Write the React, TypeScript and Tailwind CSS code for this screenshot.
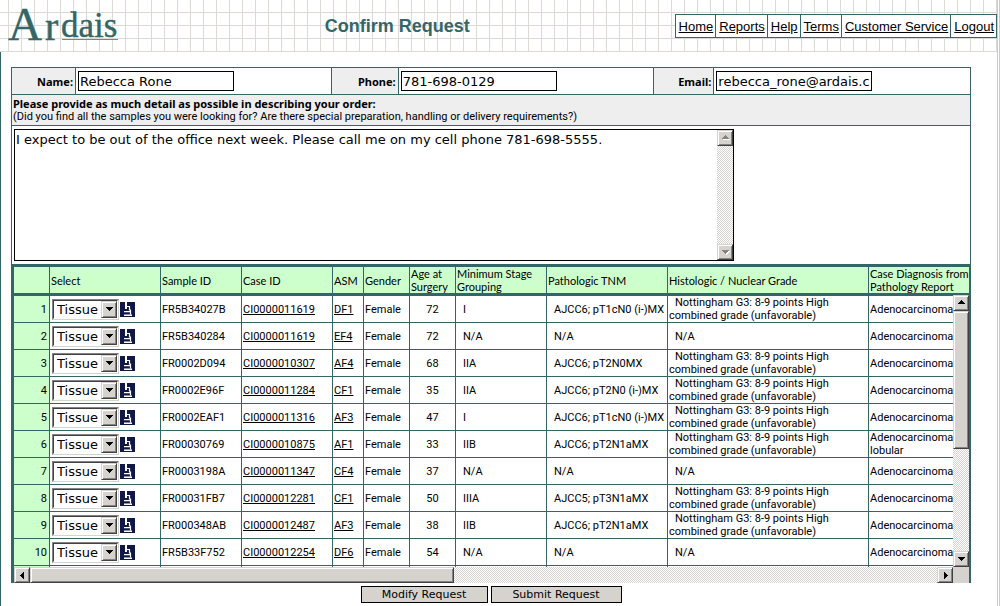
import React from "react";

type Sample = {
  id: string;
  caseId: string;
  asm: string;
  age: number;
  stage: string;
  tnm: string;
  graded: boolean;
  diagnosis: string;
};

const samples: Sample[] = [
  { id: "FR5B34027B", caseId: "CI0000011619", asm: "DF1", age: 72, stage: "I", tnm: "AJCC6; pT1cN0 (i-)MX", graded: true, diagnosis: "Adenocarcinoma" },
  { id: "FR5B340284", caseId: "CI0000011619", asm: "EF4", age: 72, stage: "N/A", tnm: "N/A", graded: false, diagnosis: "Adenocarcinoma" },
  { id: "FR0002D094", caseId: "CI0000010307", asm: "AF4", age: 68, stage: "IIA", tnm: "AJCC6; pT2N0MX", graded: true, diagnosis: "Adenocarcinoma" },
  { id: "FR0002E96F", caseId: "CI0000011284", asm: "CF1", age: 35, stage: "IIA", tnm: "AJCC6; pT2N0 (i-)MX", graded: true, diagnosis: "Adenocarcinoma" },
  { id: "FR0002EAF1", caseId: "CI0000011316", asm: "AF3", age: 47, stage: "I", tnm: "AJCC6; pT1cN0 (i-)MX", graded: true, diagnosis: "Adenocarcinoma" },
  { id: "FR00030769", caseId: "CI0000010875", asm: "AF1", age: 33, stage: "IIB", tnm: "AJCC6; pT2N1aMX", graded: true, diagnosis: "Adenocarcinoma\nlobular" },
  { id: "FR0003198A", caseId: "CI0000011347", asm: "CF4", age: 37, stage: "N/A", tnm: "N/A", graded: false, diagnosis: "Adenocarcinoma" },
  { id: "FR00031FB7", caseId: "CI0000012281", asm: "CF1", age: 50, stage: "IIIA", tnm: "AJCC5; pT3N1aMX", graded: true, diagnosis: "Adenocarcinoma" },
  { id: "FR000348AB", caseId: "CI0000012487", asm: "AF3", age: 38, stage: "IIB", tnm: "AJCC6; pT2N1aMX", graded: true, diagnosis: "Adenocarcinoma" },
  { id: "FR5B33F752", caseId: "CI0000012254", asm: "DF6", age: 54, stage: "N/A", tnm: "N/A", graded: false, diagnosis: "Adenocarcinoma" },
];

const navItems = ["Home", "Reports", "Help", "Terms", "Customer Service", "Logout"];

const headings = [
  "",
  "Select",
  "Sample ID",
  "Case ID",
  "ASM",
  "Gender",
  "Age at\nSurgery",
  "Minimum Stage\nGrouping",
  "Pathologic TNM",
  "Histologic / Nuclear Grade",
  "Case Diagnosis from\nPathology Report",
];

const raised =
  "border border-t-[#d6d3ce] border-l-[#d6d3ce] border-r-[#424142] border-b-[#424142] bg-[#d6d3ce] shadow-[inset_1px_1px_0_#fff,inset_-1px_-1px_0_#848284]";
const track = "bg-[repeating-conic-gradient(#d6d3ce_0_25%,#fff_0_50%)] bg-[length:2px_2px]";

const arrows = {
  up: "M7 4h1v1h1v1h1v1h1v1H4V7h1V6h1V5h1z",
  down: "M4 5h7v1h-1v1H9v1H8v1H7V8H6V7H5V6H4z",
  left: "M5 7h1V6h1V5h1V4h1v7H8v-1H7V9H6V8H5z",
  right: "M6 4h1v1h1v1h1v1h1v1H9v1H8v1H7v1H6z",
};

function ScrollButton({ dir, label, disabled = false }: { dir: keyof typeof arrows; label: string; disabled?: boolean }) {
  return (
    <button type="button" aria-label={label} disabled={disabled} className={`size-4 shrink-0 ${raised}`}>
      <svg viewBox="0 0 14 14" className="size-3.5" shapeRendering="crispEdges" aria-hidden="true">
        {disabled && <path d={arrows[dir]} fill="#fff" transform="translate(1 1)" />}
        <path d={arrows[dir]} fill={disabled ? "#848284" : "#000"} />
      </svg>
    </button>
  );
}

function Logo() {
  return (
    <svg width="120" height="52" viewBox="0 0 120 52" className="shrink-0 overflow-visible" role="img" aria-label="Ardais">
      <g fill="#336666" stroke="#336666" strokeWidth="0.4" fontFamily="'Liberation Serif', serif">
        <text x="8" y="40" fontSize="47">A</text>
        <text x="45" y="40" fontSize="40">r</text>
        <text x="61" y="37" fontSize="35">dais</text>
      </g>
      <rect x="62" y="39" width="56" height="1" fill="#5f9090" />
    </svg>
  );
}

function Microscope() {
  return (
    <svg viewBox="0 0 15 15" className="size-[15px]" aria-hidden="true">
      <rect width="15" height="15" fill="#101848" />
      <path d="M5 0h2v7H5z" fill="#fff" />
      <path d="M7 4.500h2.500v3.500h1V12.500" fill="none" stroke="#fff" strokeWidth="1.200" />
      <path d="M4 9h6v1.300H4zM4 12.500h8V14H4z" fill="#fff" />
    </svg>
  );
}

function Field({ id, label, value, last = false }: { id: string; label: string; value: string; last?: boolean }) {
  return (
    <>
      <label
        htmlFor={id}
        className="flex items-center justify-end border-r border-[#336666] bg-[#eee] pr-0.5 font-['Noto_Sans',sans-serif] text-[11px] font-bold"
      >
        {label}
      </label>
      <div className={`px-0.5 py-[3px] ${last ? "" : "border-r border-[#336666]"}`}>
        <input
          id={id}
          type="text"
          defaultValue={value}
          className="block h-5 w-[156px] border border-black bg-white px-px font-['DejaVu_Sans',sans-serif] text-[13px] outline-none"
        />
      </div>
    </>
  );
}

function Columns() {
  return (
    <colgroup>
      <col className="w-[36px]" />
      <col className="w-[111px]" />
      <col className="w-[81px]" />
      <col className="w-[91px]" />
      <col className="w-[31px]" />
      <col className="w-[46px]" />
      <col className="w-[46px]" />
      <col className="w-[91px]" />
      <col className="w-[121px]" />
      <col className="w-[201px]" />
      <col />
    </colgroup>
  );
}

const cell = "border-r border-b border-[#336666] py-0 pr-0 pl-px whitespace-pre";
const lastCell = "border-b border-[#336666] py-0 pr-0 pl-px whitespace-pre";

function SampleRow({ sample, index }: { sample: Sample; index: number }) {
  return (
    <tr className="h-[27px]">
      <td className="border-r border-b border-[#336666] bg-[#ccffcc] py-0 pr-0.5 text-right">{index + 1}</td>
      <td className="border-r border-b border-[#336666] py-0 pr-0 pl-0.5">
        <div className="flex items-center gap-px">
          <div className="relative h-[21px] w-[67px] border border-t-[#848284] border-r-[#d6d3ce] border-b-[#d6d3ce] border-l-[#848284]">
            <select
              aria-label={`Format for ${sample.id}`}
              className="block h-[19px] w-full appearance-none border border-t-[#424142] border-r-white border-b-white border-l-[#424142] bg-white pt-px pl-[3px] font-['DejaVu_Sans',sans-serif] text-[13px] leading-4 outline-none"
            >
              <option>Tissue</option>
            </select>
            <span className={`pointer-events-none absolute top-px right-px h-[17px] w-4 ${raised}`}>
              <svg viewBox="0 0 14 15" className="h-[15px] w-3.5" shapeRendering="crispEdges" aria-hidden="true">
                <path d={arrows.down} />
              </svg>
            </span>
          </div>
          <button type="button" aria-label={`View image of ${sample.id}`} className="block">
            <Microscope />
          </button>
        </div>
      </td>
      <td className={cell}>{sample.id}</td>
      <td className={cell}>
        <a href="#case" className="underline underline-offset-1">{sample.caseId}</a>
      </td>
      <td className={cell}>
        <a href="#asm" className="underline underline-offset-1">{sample.asm}</a>
      </td>
      <td className={cell}>Female</td>
      <td className="border-r border-b border-[#336666] p-0 text-center">{sample.age}</td>
      <td className="border-r border-b border-[#336666] py-0 pr-0 pl-[7px]">{sample.stage}</td>
      <td className="border-r border-b border-[#336666] py-0 pr-0 pl-[7px] whitespace-nowrap">{sample.tnm}</td>
      {sample.graded ? (
        <td className={`${cell} indent-1.5`}>
          {"Nottingham G3: 8-9 points High"}
          <br />
          {"combined grade (unfavorable)"}
        </td>
      ) : (
        <td className={`${cell} indent-1.5`}>N/A</td>
      )}
      <td className={lastCell}>{sample.diagnosis}</td>
    </tr>
  );
}

export default function App() {
  return (
    <div className="flex min-h-screen bg-white font-['Roboto',sans-serif] text-[11px] leading-[13px] text-black">
      <div className="min-w-0 flex-1">
        <header className="flex h-[52px] items-start bg-[linear-gradient(to_right,#dddad5_1px,transparent_1px),linear-gradient(to_bottom,#dddad5_1px,transparent_1px)] bg-[length:13px_13px] bg-[position:8px_12px]">
          <Logo />
          <h1 className="flex-1 pt-3.5 text-center font-['Liberation_Sans',sans-serif] text-[18px] leading-6 font-bold text-[#336666]">
            Confirm Request
          </h1>
          <nav className="mt-3.5 flex h-6 divide-x divide-[#336666] border border-[#336666] bg-white font-['Liberation_Sans',sans-serif] text-[13px] leading-[23px]">
            {navItems.map((item) => (
              <a key={item} href="#nav" className="pr-0.5 pl-[3px] whitespace-nowrap underline">
                {item}
              </a>
            ))}
          </nav>
        </header>

        <main className="min-h-[calc(100vh-52px)] border-l border-[#336666] pt-[15px] pr-[26px] pb-[3px] pl-2.5">
          <form onSubmit={(e) => e.preventDefault()}>
            <section className="border-x border-t border-[#336666]">
              <div className="grid grid-cols-[64px_1fr_67px_1fr_60px_1fr] border-b border-[#336666]">
                <Field id="name" label="Name:" value="Rebecca Rone" />
                <Field id="phone" label="Phone:" value="781-698-0129" />
                <Field id="email" label="Email:" value="rebecca_rone@ardais.com" last />
              </div>
              <label htmlFor="detail" className="block h-[31px] border-b border-[#336666] bg-[#eee] px-px pt-0.5">
                <span className="block font-['Noto_Sans',sans-serif] font-bold">
                  Please provide as much detail as possible in describing your order:
                </span>
                <span className="block">
                  (Did you find all the samples you were looking for? Are there special preparation, handling or delivery requirements?)
                </span>
              </label>
              <div className="px-0.5 py-[3px]">
                <div className="flex h-[132px] w-[720px] border border-black">
                  <textarea
                    id="detail"
                    defaultValue="I expect to be out of the office next week. Please call me on my cell phone 781-698-5555."
                    className="min-w-0 flex-1 resize-none overflow-hidden bg-white px-px py-0.5 font-['DejaVu_Sans',sans-serif] text-[13px] leading-4 outline-none"
                  />
                  <div className={`flex flex-col justify-between ${track}`}>
                    <ScrollButton dir="up" label="Scroll text up" disabled />
                    <ScrollButton dir="down" label="Scroll text down" disabled />
                  </div>
                </div>
              </div>
            </section>

            <section className="border-t-[3px] border-r-2 border-l-[3px] border-[#336666]">
              <table className="w-full table-fixed border-separate border-spacing-0 border-b-2 border-[#336666] bg-[#ccffcc] font-['Lato',sans-serif]">
                <Columns />
                <thead>
                  <tr className="h-[26px]">
                    {headings.map((h, i) => (
                      <th
                        key={i}
                        scope="col"
                        className={`py-0 pr-0 pl-px text-left font-normal whitespace-pre ${i < headings.length - 1 ? "border-r border-[#336666]" : ""}`}
                      >
                        {h}
                      </th>
                    ))}
                  </tr>
                </thead>
              </table>
              <div className="flex h-[272px]">
                <div className="min-w-0 flex-1 overflow-hidden">
                  <table className="w-full table-fixed border-separate border-spacing-0 border-t border-[#336666]">
                    <Columns />
                    <tbody>
                      {samples.map((s, i) => (
                        <SampleRow key={s.id} sample={s} index={i} />
                      ))}
                      <tr className="h-4">
                        <td className="border-r border-[#336666] bg-[#ccffcc]" />
                        {headings.slice(2).map((h) => (
                          <td key={h} className="border-r border-[#336666]" />
                        ))}
                        <td />
                      </tr>
                    </tbody>
                  </table>
                </div>
                <div className={`flex flex-col ${track}`}>
                  <ScrollButton dir="up" label="Scroll up" />
                  <div className={`h-[138px] ${raised}`} />
                  <div className="flex-1" />
                  <ScrollButton dir="down" label="Scroll down" />
                </div>
              </div>
              <div className="flex h-4">
                <div className={`flex flex-1 ${track}`}>
                  <ScrollButton dir="left" label="Scroll left" />
                  <div className={`w-[424px] ${raised}`} />
                  <div className="flex-1" />
                  <ScrollButton dir="right" label="Scroll right" />
                </div>
                <div className="w-4 bg-[#d6d3ce]" />
              </div>
            </section>

            <div className="mt-[3px] flex justify-center gap-[3px] font-['DejaVu_Sans',sans-serif]">
              <button type="button" className="h-[17px] w-[127px] border border-black bg-[#d6d3ce]">
                Modify Request
              </button>
              <button type="submit" className="h-[17px] w-[131px] border border-black bg-[#d6d3ce]">
                Submit Request
              </button>
            </div>
          </form>
        </main>
      </div>
      <div className="w-[3px] border-x border-[#cccccc]" />
    </div>
  );
}
